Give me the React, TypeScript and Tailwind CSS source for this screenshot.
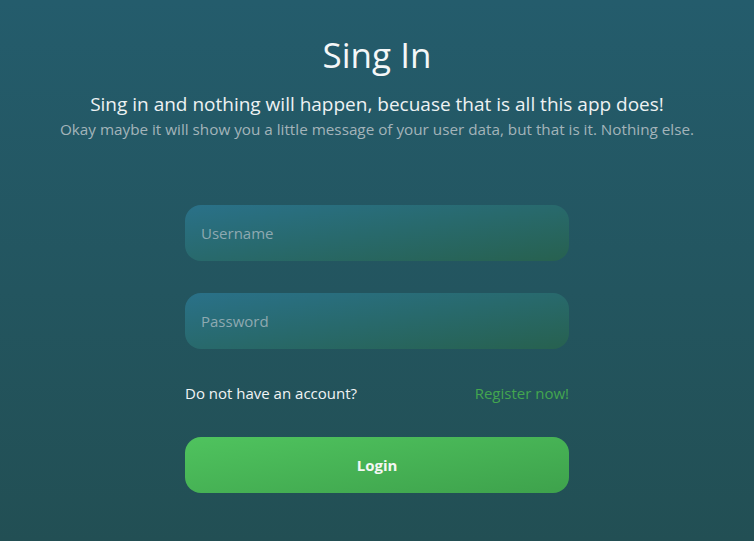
export default function App() {
  return (
    <div
      className="flex min-h-[541px] flex-col items-center bg-gradient-to-b from-[#245c6c] to-[#224f54] text-white"
      style={{ fontFamily: '"Open Sans", "Noto Sans", sans-serif' }}
    >
      <h1 className="mt-[33px] text-[35px] leading-[44px] text-[#f4f7f8]">Sing In</h1>
      <p className="mt-[14px] text-[19px] leading-[26px] text-[#eef2f3]">
        Sing in and nothing will happen, becuase that is all this app does!
      </p>
      <p className="mt-[1px] text-[15.25px] leading-[22px] text-[#a3b4ba]">
        Okay maybe it will show you a little message of your user data, but that is it. Nothing else.
      </p>

      <form className="mt-[65px] flex w-[384px] flex-col" onSubmit={(e) => e.preventDefault()}>
        <input
          type="text"
          placeholder="Username"
          className="h-[56px] rounded-[16px] bg-gradient-to-br from-[#2a7189] to-[#27614f] px-4 text-[15px] text-white outline-none placeholder:text-[#8ea9b1]"
        />
        <input
          type="password"
          placeholder="Password"
          className="mt-[32px] h-[56px] rounded-[16px] bg-gradient-to-br from-[#2a7189] to-[#27614f] px-4 text-[15px] text-white outline-none placeholder:text-[#8ea9b1]"
        />
        <div className="mt-[34px] flex items-center justify-between text-[15px] leading-[20px]">
          <span className="text-[#f1f4f5]">Do not have an account?</span>
          <a href="#" className="text-[#43a64f]">
            Register now!
          </a>
        </div>
        <button
          type="submit"
          className="mt-[34px] h-[56px] rounded-[16px] bg-gradient-to-br from-[#4fc35e] to-[#3ea24c] text-[15px] font-bold text-[#f4f7f4]"
        >
          Login
        </button>
      </form>
    </div>
  )
}
